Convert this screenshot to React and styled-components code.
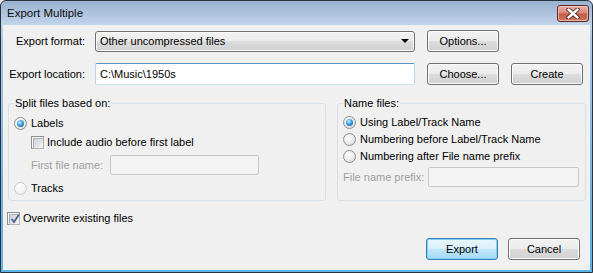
import styled, { createGlobalStyle } from 'styled-components'

const GlobalStyle = createGlobalStyle`
  html, body {
    margin: 0;
    padding: 0;
    background: #f0f0f0;
  }
  body {
    font-family: "Liberation Sans", Arial, sans-serif;
    font-size: 11px;
    color: #000;
  }
  * { box-sizing: border-box; }
`

const Window = styled.div`
  width: 593px;
  height: 273px;
  border: 1px solid #27323f;
  border-radius: 6px 6px 0 0;
  background: linear-gradient(to bottom, #99b1d0 0px, #c0d4ea 24px, #a9c8e8 40px, #6fb0e2 200px, #5ab4e6 100%);
  display: flex;
  flex-direction: column;
  overflow: hidden;
`

const TitleBar = styled.div`
  height: 24px;
  display: flex;
  justify-content: space-between;
  align-items: flex-start;
  padding-left: 6px;
`

const Title = styled.div`
  font-size: 11.5px;
  line-height: 24px;
  color: #0b0b0b;
`

const CloseButton = styled.div`
  width: 32px;
  height: 17px;
  margin: 4px 3px 0 0;
  border: 1px solid #5a2a25;
  border-radius: 3px;
  background: linear-gradient(to bottom, #eab1a3 0%, #d98877 45%, #c55a45 55%, #cf7a5f 100%);
  box-shadow: inset 0 0 0 1px rgba(255, 220, 210, 0.6);
  display: flex;
  align-items: center;
  justify-content: center;
`

const Content = styled.div`
  flex: 1;
  margin: 0 2px 2px 2px;
  background: #f0f0f0;
  display: flex;
  flex-direction: column;
`

const FieldRow = styled.div`
  display: flex;
  align-items: center;
  gap: 12px;
  height: 22px;
  margin-top: ${(p) => p.$mt}px;
`

const FieldLabel = styled.div`
  width: 82px;
  margin-right: -2px;
  text-align: right;
  white-space: nowrap;
`

const Select = styled.div`
  width: 320px;
  height: 21px;
  border: 1px solid #707070;
  border-radius: 3px;
  background: linear-gradient(to bottom, #f2f2f2 0%, #ebebeb 50%, #dddddd 50%, #cfcfcf 100%);
  box-shadow: inset 0 0 0 1px #fbfbfb;
  display: flex;
  align-items: center;
  justify-content: space-between;
  padding: 0 5px 0 4px;
`

const Arrow = styled.span`
  width: 0;
  height: 0;
  border-left: 4px solid transparent;
  border-right: 4px solid transparent;
  border-top: 4px solid #000;
`

const TextBox = styled.div`
  width: 320px;
  height: 22px;
  background: #fff;
  border: 1px solid #b7d5ea;
  border-top-color: #5794bf;
  border-bottom-color: #c7e2f1;
  border-radius: 2px;
  display: flex;
  align-items: center;
  padding-left: 4px;
`

const Button = styled.div`
  width: 72px;
  height: 22px;
  border: 1px solid ${(p) => (p.$primary ? '#3c7fb1' : '#707070')};
  border-radius: 3px;
  background: ${(p) =>
    p.$primary
      ? 'linear-gradient(to bottom, #eaf6fd 0%, #d9f0fc 50%, #bee6fd 50%, #a7d9f5 100%)'
      : 'linear-gradient(to bottom, #f2f2f2 0%, #ebebeb 50%, #dddddd 50%, #cfcfcf 100%)'};
  box-shadow: inset 0 0 0 1px ${(p) => (p.$primary ? '#7fd0f5' : '#fbfbfb')};
  display: flex;
  align-items: center;
  justify-content: center;
`

const Groups = styled.div`
  display: flex;
  gap: 11px;
  padding-left: 5px;
  margin-top: 11px;
`

const Group = styled.fieldset`
  width: ${(p) => p.$width}px;
  height: 105px;
  margin: 0;
  padding: ${(p) => p.$top}px 5px 0 5px;
  border: 1px solid #d5dfe5;
  border-radius: 3px;
  display: flex;
  flex-direction: column;
`

const Legend = styled.legend`
  padding: 0 1px;
  line-height: 14px;
`

const OptionRow = styled.label`
  display: flex;
  align-items: center;
  gap: ${(p) => (p.$box ? 3 : 4)}px;
  height: 16px;
  margin-top: ${(p) => p.$mt || 0}px;
  margin-left: ${(p) => p.$indent || 0}px;
  white-space: nowrap;
`

const Radio = styled.span`
  width: 13px;
  height: 13px;
  border-radius: 50%;
  border: 1px solid ${(p) => (p.$faint ? '#c9cbcc' : '#8e8f8f')};
  background: ${(p) =>
    p.$faint
      ? 'radial-gradient(circle at 40% 35%, #fdfdfd 0%, #f2f2f2 60%, #e6e6e6 100%)'
      : 'radial-gradient(circle at 40% 35%, #fdfdfd 0%, #e9e9e9 55%, #cfcfcf 100%)'};
  display: flex;
  align-items: center;
  justify-content: center;

  &::after {
    content: '';
    display: ${(p) => (p.$checked ? 'block' : 'none')};
    width: 7px;
    height: 7px;
    border-radius: 50%;
    background: radial-gradient(circle at 40% 35%, #c6eefd 0%, #3fa3de 45%, #0e4a88 100%);
  }
`

const CheckBox = styled.span`
  width: 13px;
  height: 13px;
  border: 1px solid #8e8f8f;
  background: #f6f6f6;
  padding: 1px;
  position: relative;

  &::before {
    content: '';
    display: block;
    width: 100%;
    height: 100%;
    border: 1px solid #aeb3b9;
    background: linear-gradient(135deg, #cbcfd5 0%, #f6f6f6 100%);
  }

  svg {
    position: absolute;
    left: 1px;
    top: 0px;
  }
`

const InputRow = styled.div`
  display: flex;
  align-items: center;
  height: 20px;
  margin-top: ${(p) => p.$mt}px;
  margin-left: ${(p) => p.$indent || 0}px;
`

const Caption = styled.span`
  width: ${(p) => p.$width}px;
  color: #a0a0a0;
  white-space: nowrap;
`

const DisabledInput = styled.div`
  width: ${(p) => p.$width}px;
  height: 20px;
  border: 1px solid #c5c9cc;
  border-radius: 2px;
  background: #f3f3f3;
`

const Footer = styled.div`
  display: flex;
  justify-content: flex-end;
  gap: 10px;
  padding-right: 10px;
  margin-top: 12px;
`

const Check = () => (
  <svg width="12" height="12" viewBox="0 0 12 12">
    <path d="M2.5 6 L5 9 L10 1.5" fill="none" stroke="#4c6293" strokeWidth="1.8" />
  </svg>
)

const App = () => {
  return (
    <>
      <GlobalStyle />
      <Window>
        <TitleBar>
          <Title>Export Multiple</Title>
          <CloseButton>
            <svg width="14" height="11" viewBox="0 0 14 11">
              <path d="M2.5 1.5 L11.5 9.5 M11.5 1.5 L2.5 9.5" stroke="#4a2520" strokeWidth="4.2" strokeLinecap="round" />
              <path d="M2.5 1.5 L11.5 9.5 M11.5 1.5 L2.5 9.5" stroke="#fff" strokeWidth="2.4" strokeLinecap="round" />
            </svg>
          </CloseButton>
        </TitleBar>
        <Content>
          <FieldRow $mt={5}>
            <FieldLabel>Export format:</FieldLabel>
            <Select>
              <span>Other uncompressed files</span>
              <Arrow />
            </Select>
            <Button>Options...</Button>
          </FieldRow>
          <FieldRow $mt={11}>
            <FieldLabel>Export location:</FieldLabel>
            <TextBox>{'C:\\Music\\1950s'}</TextBox>
            <Button>Choose...</Button>
            <Button>Create</Button>
          </FieldRow>
          <Groups>
            <Group $width={318} $top={5}>
              <Legend>Split files based on:</Legend>
              <OptionRow>
                <Radio $checked />
                Labels
              </OptionRow>
              <OptionRow $box $mt={3} $indent={17}>
                <CheckBox />
                Include audio before first label
              </OptionRow>
              <InputRow $mt={5} $indent={17}>
                <Caption $width={79}>First file name:</Caption>
                <DisabledInput $width={149} />
              </InputRow>
              <OptionRow $mt={5}>
                <Radio $faint />
                Tracks
              </OptionRow>
            </Group>
            <Group $width={249} $top={4}>
              <Legend>Name files:</Legend>
              <OptionRow>
                <Radio $checked />
                Using Label/Track Name
              </OptionRow>
              <OptionRow $mt={1}>
                <Radio />
                Numbering before Label/Track Name
              </OptionRow>
              <OptionRow $mt={1}>
                <Radio />
                Numbering after File name prefix
              </OptionRow>
              <InputRow $mt={3}>
                <Caption $width={85}>File name prefix:</Caption>
                <DisabledInput $width={151} />
              </InputRow>
            </Group>
          </Groups>
          <OptionRow $box $mt={9} $indent={4}>
            <CheckBox>
              <Check />
            </CheckBox>
            Overwrite existing files
          </OptionRow>
          <Footer>
            <Button $primary>Export</Button>
            <Button>Cancel</Button>
          </Footer>
        </Content>
      </Window>
    </>
  )
}

export default App
